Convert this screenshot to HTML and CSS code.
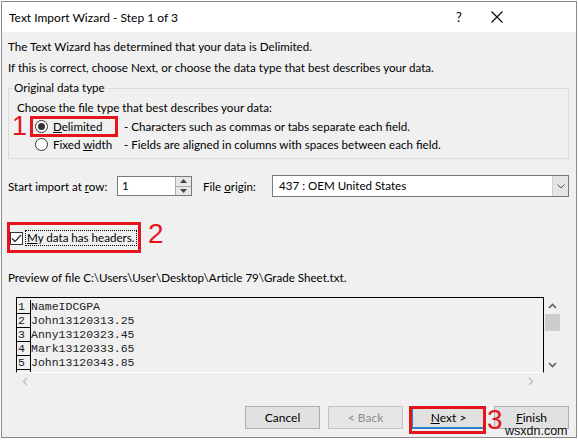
FILE: index.html
```html
<!DOCTYPE html>
<html lang="en">

<head>
	<meta charset="UTF-8">
	<title>Text Import Wizard - Step 1 of 3</title>
	<link rel="stylesheet" href="styles.css">
</head>

<body>

	<div class="dialog">
		<div class="titlebar">
			<span class="title">Text Import Wizard - Step 1 of 3</span>
			<span class="help">?</span>
			<span class="close">
				<svg width="12" height="12" viewBox="0 0 12 12">
					<path d="M0.5 0.5 L11.5 11.5 M11.5 0.5 L0.5 11.5" stroke="#000" stroke-width="1.1" fill="none" />
				</svg>
			</span>
		</div>

		<div class="content">
			<div class="intro">
				<div>The Text Wizard has determined that your data is Delimited.</div>
				<div>If this is correct, choose Next, or choose the data type that best describes your data.</div>
			</div>

			<fieldset class="group">
				<legend>Original data type</legend>
				<div class="choose">Choose the file type that best describes your data:</div>
				<div class="types">
					<label class="radio"><span class="dot checked"></span><span><u>D</u>elimited</span></label>
					<span class="desc">- Characters such as commas or tabs separate each field.</span>
					<label class="radio"><span class="dot"></span><span>Fixed <u>w</u>idth</span></label>
					<span class="desc">- Fields are aligned in columns with spaces between each field.</span>
				</div>
			</fieldset>

			<div class="options">
				<span class="row-label">Start import at <u>r</u>ow:</span>
				<div class="spinner">
					<span class="spin-value">1</span>
					<div class="spin-buttons">
						<span class="spin-btn">
							<svg width="7" height="4" viewBox="0 0 7 4"><path d="M0 4 L3.5 0 L7 4 Z" fill="#444" /></svg>
						</span>
						<span class="spin-btn">
							<svg width="7" height="4" viewBox="0 0 7 4"><path d="M0 0 L3.5 4 L7 0 Z" fill="#444" /></svg>
						</span>
					</div>
				</div>
				<span class="origin-label">File <u>o</u>rigin:</span>
				<div class="select">
					<span class="select-value">437 : OEM United States</span>
					<span class="select-arrow">
						<svg width="8" height="5" viewBox="0 0 8 5"><path d="M0.5 0.5 L4 4 L7.5 0.5" stroke="#555" fill="none" /></svg>
					</span>
				</div>
			</div>

			<div class="headers">
				<span class="check">
					<svg width="11" height="9" viewBox="0 0 11 9"><path d="M1 4.5 L4 7.5 L10 1" stroke="#333" stroke-width="1.3" fill="none" /></svg>
				</span>
				<span class="focus"><u>M</u>y data has headers.</span>
			</div>

			<div class="preview-label">Preview of file C:\Users\User\Desktop\Article 79\Grade Sheet.txt.</div>

			<div class="preview">
				<div class="preview-main">
					<div class="grid">
						<div class="line"><span class="num">1</span><span class="cell">NameIDCGPA</span></div>
						<div class="line"><span class="num">2</span><span class="cell">John13120313.25</span></div>
						<div class="line"><span class="num">3</span><span class="cell">Anny13120323.45</span></div>
						<div class="line"><span class="num">4</span><span class="cell">Mark13120333.65</span></div>
						<div class="line"><span class="num">5</span><span class="cell">John13120343.85</span></div>
						<div class="line"><span class="num"></span><span class="cell"></span></div>
					</div>
					<div class="vscroll">
						<svg width="9" height="6" viewBox="0 0 9 6"><path d="M1 5 L4.5 1.5 L8 5" stroke="#606060" stroke-width="1.6" fill="none" /></svg>
						<span class="thumb"></span>
						<span class="vspace"></span>
						<svg width="9" height="6" viewBox="0 0 9 6"><path d="M1 1 L4.5 4.5 L8 1" stroke="#606060" stroke-width="1.6" fill="none" /></svg>
					</div>
				</div>
				<div class="hscroll">
					<svg width="6" height="9" viewBox="0 0 6 9"><path d="M5 1 L1.5 4.5 L5 8" stroke="#c4c4c4" stroke-width="1.6" fill="none" /></svg>
					<svg width="6" height="9" viewBox="0 0 6 9"><path d="M1 1 L4.5 4.5 L1 8" stroke="#c4c4c4" stroke-width="1.6" fill="none" /></svg>
				</div>
			</div>

			<div class="buttons">
				<span class="btn">Cancel</span>
				<span class="btn disabled">&lt; Back</span>
				<span class="btn default"><u>N</u>ext &gt;</span>
				<span class="btn"><u>F</u>inish</span>
			</div>
		</div>

		<!-- red callouts drawn on top of the dialog -->
		<span class="mark mark-1"></span>
		<span class="mark mark-2"></span>
		<span class="mark mark-3"></span>
		<span class="step step-1">1</span>
		<span class="step step-2">2</span>
		<span class="step step-3">3</span>
		<span class="watermark">wsxdn.com</span>
	</div>

</body>

</html>
```

FILE: styles.css
```css
body {
	margin: 0;
	background-color: #ffffff;
	font-family: 'Lato', 'Noto Sans', sans-serif;
	font-size: 11.6px;
	color: #000;
}

.dialog {
	position: relative;
	margin: 1px 0 0 1px;
	width: 574px;
	height: 435px;
	border: 1px solid #8a8a8a;
	background-color: #f0f0f0;
	display: flex;
	flex-direction: column;
}

.titlebar {
	height: 30px;
	background-color: #ffffff;
	display: flex;
	align-items: center;
	padding: 0 56px 0 7px;
}

.title {
	flex: 1;
	font-size: 12px;
}

.help {
	width: 20px;
	text-align: center;
	font-size: 13px;
}

.close {
	margin-left: 5px;
	width: 46px;
	display: flex;
	justify-content: center;
}

.content {
	padding: 0 7px 0 6px;
	display: flex;
	flex-direction: column;
	white-space: nowrap;
}

.intro {
	padding-top: 4px;
	line-height: 21px;
}

.group {
	margin: 2px 0 0 0;
	padding: 0 0 5px 8px;
	border: 1px solid #dcdcdc;
	min-width: 0;
}

.group legend {
	margin-left: -5px;
	padding: 0 2px;
	line-height: 16px;
}

.choose {
	margin-top: 4px;
	line-height: 16px;
}

.types {
	display: grid;
	grid-template-columns: 89px auto;
	grid-auto-rows: 18px;
	align-items: center;
	margin: 1px 0 0 18px;
}

.radio {
	display: flex;
	align-items: center;
	gap: 5px;
}

.dot {
	width: 11px;
	height: 11px;
	border: 1px solid #333;
	border-radius: 50%;
	background-color: #fff;
	display: flex;
	align-items: center;
	justify-content: center;
}

.dot.checked::after {
	content: "";
	width: 7px;
	height: 7px;
	border-radius: 50%;
	background-color: #333;
}

.options {
	margin-top: 16px;
	height: 22px;
	display: flex;
	align-items: center;
}

.row-label {
	width: 109px;
}

.spinner {
	display: flex;
	height: 20px;
	width: 75px;
	border: 1px solid #7a7a7a;
	background-color: #fff;
	box-sizing: border-box;
}

.spin-value {
	flex: 1;
	padding-left: 4px;
	line-height: 18px;
}

.spin-buttons {
	width: 15px;
	display: flex;
	flex-direction: column;
	border-left: 1px solid #adadad;
}

.spin-btn {
	flex: 1;
	background-color: #e8e8e8;
	display: flex;
	align-items: center;
	justify-content: center;
}

.spin-btn+.spin-btn {
	border-top: 1px solid #adadad;
}

.origin-label {
	margin-left: 11px;
	width: 69px;
}

.select {
	flex: 1;
	height: 22px;
	display: flex;
	border: 1px solid #7a7a7a;
	background-color: #fff;
	box-sizing: border-box;
}

.select-value {
	flex: 1;
	padding-left: 6px;
	line-height: 20px;
}

.select-arrow {
	width: 15px;
	background-color: #e5e5e5;
	border-left: 1px solid #cfcfcf;
	display: flex;
	align-items: center;
	justify-content: center;
}

.headers {
	margin-top: 33px;
	display: flex;
	align-items: center;
	height: 16px;
}

.check {
	margin-left: 2px;
	width: 11px;
	height: 11px;
	border: 1px solid #333;
	background-color: #fff;
	display: flex;
	align-items: center;
	justify-content: center;
}

.focus {
	margin-left: 2px;
	padding: 0 1px;
	line-height: 14px;
	border: 1px dotted #000;
}

.preview-label {
	margin-top: 24px;
	line-height: 16px;
}

.preview {
	margin: 11px 0 0 8px;
	width: 545px;
	display: flex;
	flex-direction: column;
}

.preview-main {
	display: flex;
	height: 76px;
}

.grid {
	width: 526px;
	border: 1px solid #000;
	border-bottom-color: #ffffff;
	padding-top: 2px;
	overflow: hidden;
	font-family: 'Liberation Mono', monospace;
	font-size: 11.5px;
	color: #222;
	display: flex;
	flex-direction: column;
}

.line {
	display: flex;
	height: 14px;
	line-height: 13px;
	flex: none;
}

.num {
	width: 14px;
	padding-left: 1px;
	border-right: 1px solid #000;
	border-bottom: 1px solid #000;
	box-sizing: border-box;
}

.line:last-child .num {
	border-bottom: none;
	height: 40px;
}

.vscroll {
	width: 17px;
	display: flex;
	flex-direction: column;
	align-items: center;
	padding: 6px 0 5px 0;
}

.thumb {
	margin-top: 5px;
	width: 15px;
	height: 17px;
	background-color: #cdcdcd;
}

.vspace {
	flex: 1;
}

.hscroll {
	height: 17px;
	display: flex;
	align-items: center;
	justify-content: space-between;
	padding: 0 27px 0 6px;
}

.buttons {
	margin-top: 16px;
	display: flex;
	justify-content: flex-end;
	gap: 8px;
}

.btn {
	width: 75px;
	height: 23px;
	box-sizing: border-box;
	border: 1px solid #adadad;
	background-color: #e1e1e1;
	display: flex;
	align-items: center;
	justify-content: center;
	font-size: 12px;
	line-height: 12px;
}

.btn.disabled {
	color: #8b8b8b;
	border-color: #c4c4c4;
	background-color: #e6e6e6;
}

.btn.default {
	border: 2px solid #2f7fd1;
}

.mark {
	position: absolute;
	border: 3px solid #e4151c;
	box-sizing: border-box;
}

.mark-1 {
	left: 28px;
	top: 114px;
	width: 88px;
	height: 21px;
}

.mark-2 {
	left: 5px;
	top: 220px;
	width: 134px;
	height: 31px;
}

.mark-3 {
	left: 407px;
	top: 404px;
	width: 77px;
	height: 28px;
}

.step {
	position: absolute;
	color: #e4151c;
	font-family: 'Liberation Sans', sans-serif;
	line-height: 0.7;
}

.step-1 {
	left: 10px;
	top: 115px;
	font-size: 27px;
}

.step-2 {
	left: 146px;
	top: 222px;
	font-size: 28px;
}

.step-3 {
	left: 485px;
	top: 408px;
	font-size: 28px;
}

.watermark {
	position: absolute;
	left: 503px;
	top: 423px;
	font-family: 'Liberation Sans', sans-serif;
	font-size: 12.5px;
	line-height: 1;
	color: #111;
}
```
